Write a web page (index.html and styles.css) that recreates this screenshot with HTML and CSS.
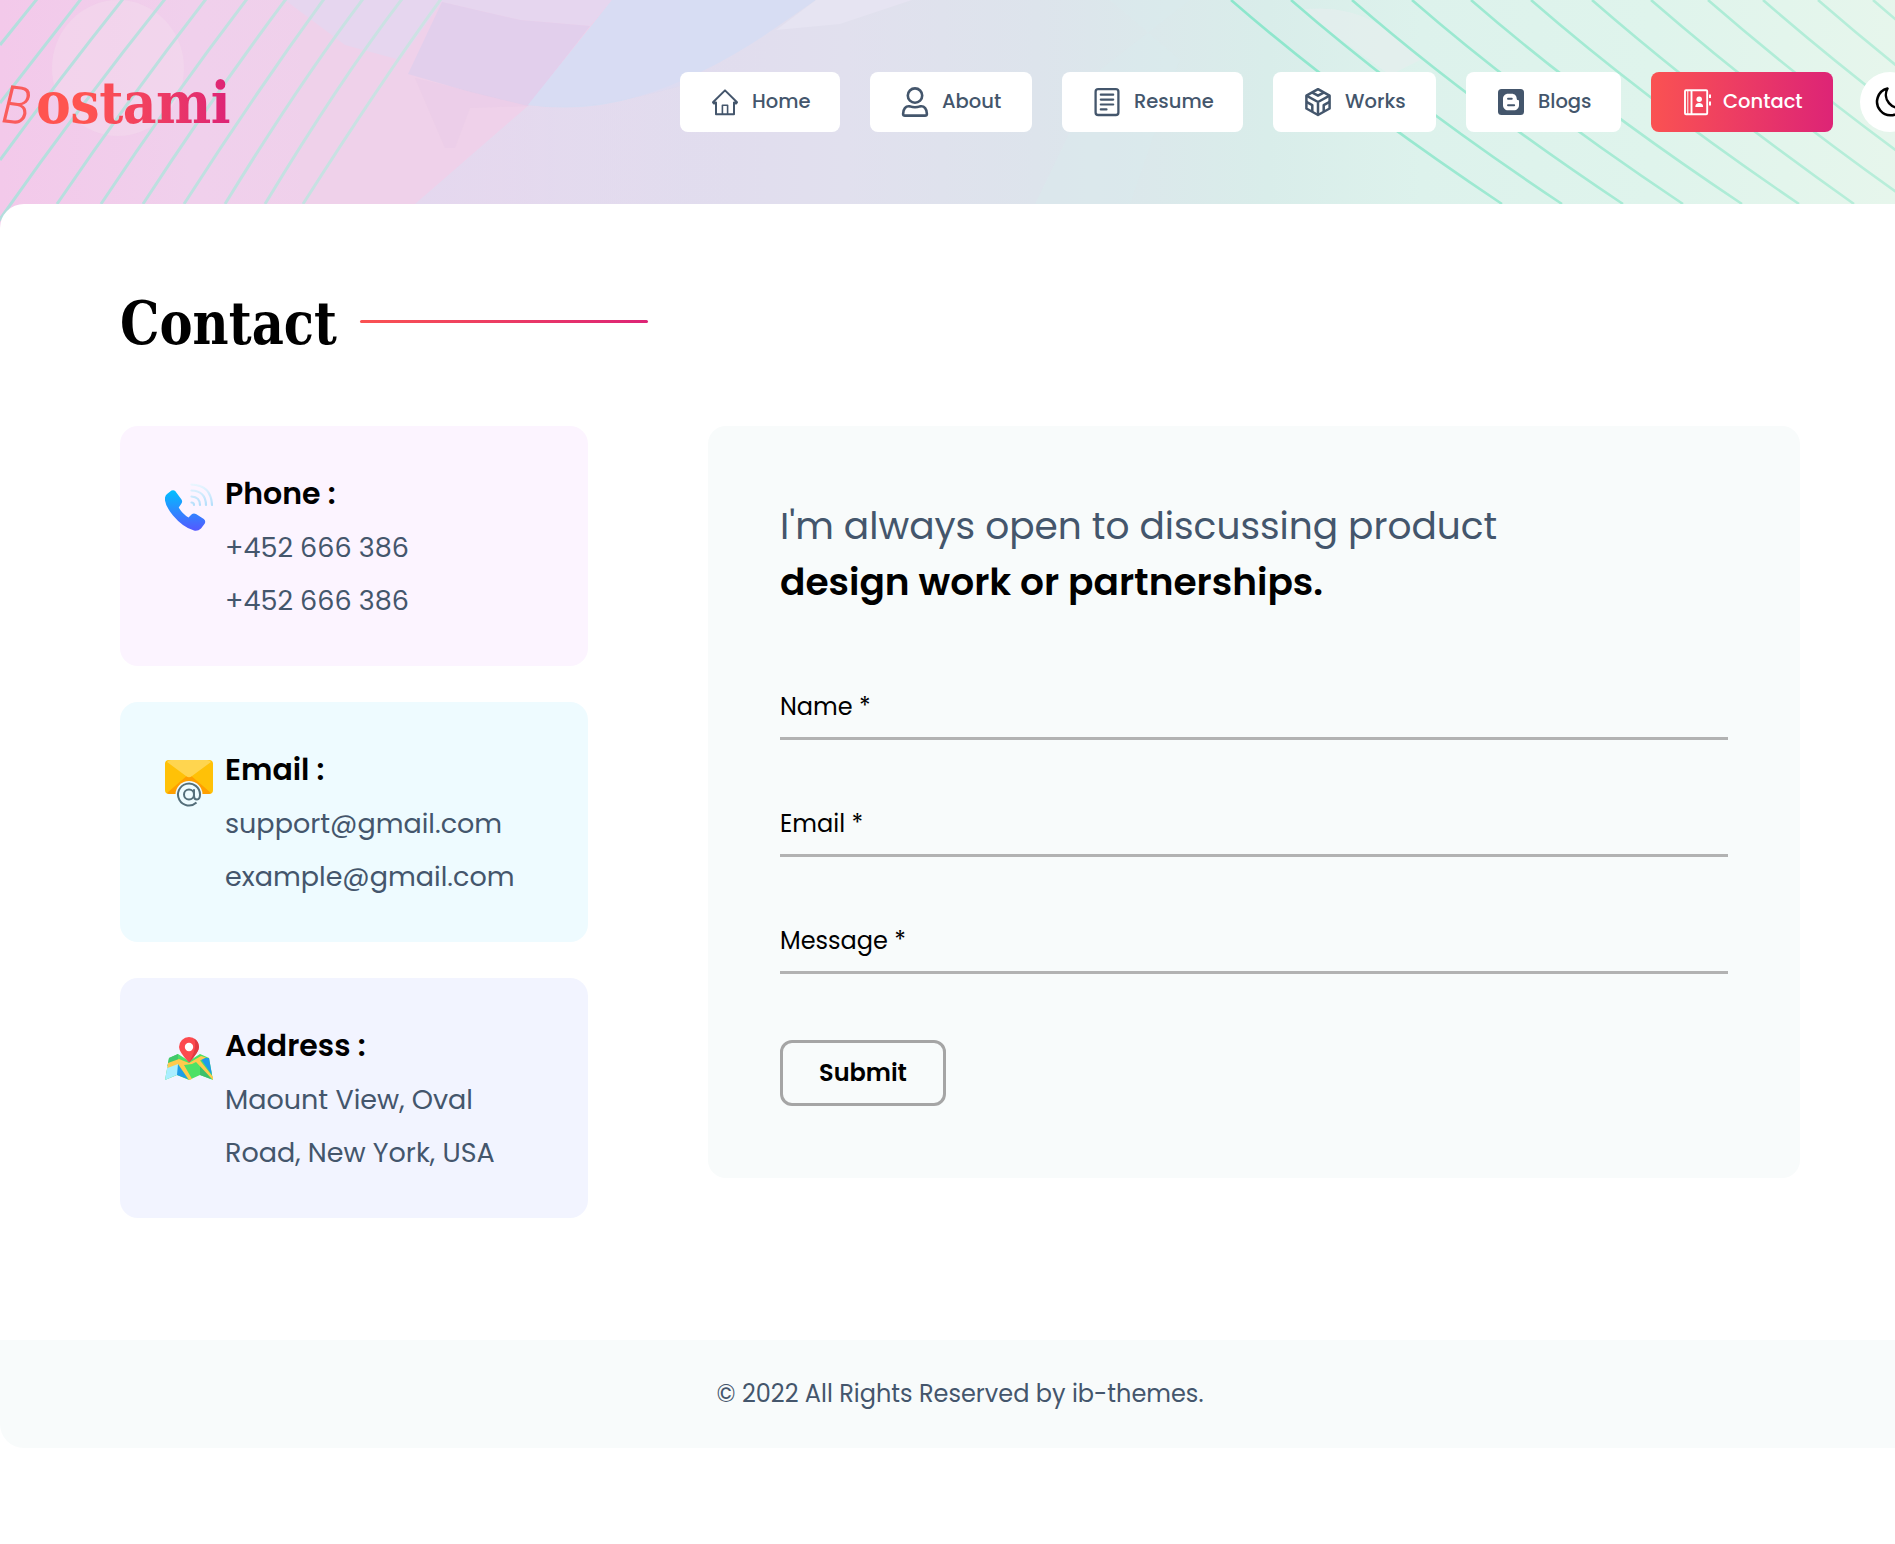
FILE: index.html
```html
<!DOCTYPE html>
<html lang="en">
<head>
<meta charset="utf-8">
<title>Bostami - Contact</title>
<link rel="stylesheet" href="styles.css">
</head>
<body>
<div class="page">
  <svg class="backdrop" viewBox="0 0 1920 240" aria-hidden="true">
    <defs>
      <linearGradient id="sky" x1="0" x2="1920" y1="0" y2="0" gradientUnits="userSpaceOnUse">
        <stop offset="0" stop-color="#f3c9ea"/>
        <stop offset=".1" stop-color="#f0d0ec"/>
        <stop offset=".23" stop-color="#efd1ea"/>
        <stop offset=".29" stop-color="#e5d9ee"/>
        <stop offset=".36" stop-color="#e1dcee"/>
        <stop offset=".44" stop-color="#e1e0ee"/>
        <stop offset=".54" stop-color="#dde4ec"/>
        <stop offset=".66" stop-color="#d9edea"/>
        <stop offset=".74" stop-color="#ddf2ec"/>
        <stop offset=".86" stop-color="#dff4ec"/>
        <stop offset="1" stop-color="#e7f6ec"/>
      </linearGradient>
      <linearGradient id="mint" x1="1230" x2="1895" y1="0" y2="0" gradientUnits="userSpaceOnUse">
        <stop offset="0" stop-color="#8ce6cc"/>
        <stop offset="1" stop-color="#b9eeda"/>
      </linearGradient>
      <linearGradient id="teal" x1="0" x2="450" y1="0" y2="0" gradientUnits="userSpaceOnUse">
        <stop offset="0" stop-color="#b3dedd"/>
        <stop offset="1" stop-color="#cfe2e4"/>
      </linearGradient>
      <linearGradient id="lavender" x1="415" x2="800" y1="0" y2="0" gradientUnits="userSpaceOnUse">
        <stop offset="0" stop-color="#e4d8ef"/>
        <stop offset="1" stop-color="#e1dfee" stop-opacity="0"/>
      </linearGradient>
    </defs>
    <rect width="1920" height="240" fill="url(#sky)"/>
    <ellipse cx="118" cy="68" rx="66" ry="68" fill="#f4dbee" opacity=".5"/>
    <path d="M300 240V0H612L528 106L415 204L385 240Z" fill="#efd1ea"/>
    <path d="M612 0L528 106L415 204L385 240H800V0Z" fill="url(#lavender)"/>
    <path d="M285 0H612L590 26L520 20L442 2L400 60L345 45Z" fill="#e6d6ef"/>
    <path d="M442 2L520 20L590 26L528 106L470 92L408 74Z" fill="#e2cfec"/>
    <path d="M415 78L528 106L470 108L455 148H445Z" fill="#e9cce8" opacity=".5"/>
    <path d="M612 0H816L765 35Q700 78 640 96Q585 113 528 105Z" fill="#d7ddf3"/>
    <path d="M612 0H680V86Q585 113 528 105Z" fill="#dadcf3" opacity=".5"/>
    <path d="M816 0H912L840 24L776 30Z" fill="#e6e4f2"/>
    <path d="M1110 0H1190L1100 70L1035 204H1130L1180 60Z" fill="#d9ebed" opacity=".4"/>
    <path d="M1300 10Q1370 0 1420 60L1390 75Z" fill="#e6eeee" opacity=".7"/>
    <g fill="none" stroke="url(#teal)" stroke-width="3">
      <path d="M37-1L0 45M81-1L0 103M123-1Q60 78 0 160M165-1Q80 105-2 222"/>
      <path d="M206-1Q130 97 57 204M247-1Q172 97 101 204M286-1Q214 95 143 204M324-1Q254 95 184 204M363-1Q298 85 225 204M402-1Q340 80 265 204M441-1Q382 80 303 204"/>
    </g>
    <g fill="none" stroke="url(#mint)" stroke-width="2.6">
      <path d="M1231 0q115 100 271 204M1291 0q115 100 271 204M1352 0q115 100 271 204M1412 0q115 100 271 204M1471 0q115 100 271 204M1531 0q115 100 268 204M1592 0q115 100 262 204M1651 0q115 100 262 204M1708 0q115 100 262 204M1763 0q115 100 262 204M1818 0q115 100 262 204M1873 0q115 100 262 204"/>
    </g>
  </svg>

  <header class="header">
    <a class="logo"><span class="logo-initial">B</span><span class="logo-name">ostami</span></a>
    <nav class="nav">
      <a class="nav-item nav-home">
        <svg class="icon" viewBox="0 0 30 30" fill="none" stroke="#44566c" stroke-width="2" stroke-linejoin="round" stroke-linecap="round"><path d="M15 3.400L27 15.300L26 16.500L24 15.500V27.200H6V15.500L4 16.500L3 15.300Z"/><path d="M12.400 27V18.300H17.600V27" stroke-width="1.600"/></svg>
        <span>Home</span></a>
      <a class="nav-item nav-about">
        <svg class="icon" viewBox="0 0 30 30" fill="none" stroke="#44566c" stroke-width="2.600" stroke-linejoin="round"><circle cx="15" cy="8.600" r="7.200"/><path d="M10 19.400Q15 21.200 20 19.400C24.500 18.600 26.900 22.300 26.900 27Q26.900 28.600 25 28.600H5Q3.100 28.600 3.100 27C3.100 22.300 5.500 18.600 10 19.400Z"/></svg>
        <span>About</span></a>
      <a class="nav-item nav-resume">
        <svg class="icon" viewBox="0 0 30 30" fill="none" stroke="#44566c" stroke-width="2.300" stroke-linecap="round"><rect x="3.600" y="2.200" width="22.800" height="25.800" rx="2.600"/><path d="M8.800 7.700H21.200M8.800 12.600H21.200M8.800 17.500H21.200M8.800 22.400H14.500" stroke-width="2.200"/></svg>
        <span>Resume</span></a>
      <a class="nav-item nav-works">
        <svg class="icon" viewBox="0 0 30 30" fill="none" stroke="#44566c" stroke-width="2.500" stroke-linejoin="round"><path d="M15 2.200L26.600 8.700V21.500L15 28L3.400 21.500V8.700Z"/><path d="M15 28V15L3.400 8.700M15 15L26.600 8.700M9.300 5.600L15 8.700L20.700 5.600M3.400 14.800L9.300 18.100V24.600M26.600 14.800L20.700 18.100V24.600"/></svg>
        <span>Works</span></a>
      <a class="nav-item nav-blogs">
        <svg class="icon" viewBox="0 0 30 30"><rect x="2" y="2" width="26" height="26" rx="3.500" fill="#44566c"/><path d="M12 6.700H15.500C19 6.700 20.700 9 20.700 11.500C20.700 13 21.300 13 22 13Q23 13.100 23 14.200V18.300C23 21.200 20.800 23.300 18 23.300H12C9.200 23.300 7 21.200 7 18.300V11.700C7 8.900 9.200 6.700 12 6.700Z" fill="#fff"/><path d="M12 11.800H15.800M12 18.300H18.200" stroke="#44566c" stroke-width="1.900" stroke-linecap="round"/></svg>
        <span>Blogs</span></a>
      <a class="nav-item nav-contact active">
        <svg class="icon" viewBox="0 0 30 30" fill="none" stroke="#fff" stroke-width="1.900"><rect x="4" y="3.200" width="22.200" height="24" rx="1"/><path d="M6.800 3.200V27.200" stroke-width="1"/><path d="M10.500 3.200V27.200"/><path d="M29 7.500V11M29 14.500V18.500" stroke-width="2"/><circle cx="18.200" cy="12.300" r="2.700" fill="#fff" stroke="none"/><path d="M14.300 20C14.300 17 16 16 18.200 16S22.100 17 22.100 20Z" fill="#fff" stroke="none"/></svg>
        <span>Contact</span></a>
      <button class="theme-toggle" aria-label="Theme"><svg class="icon" viewBox="0 0 30 30" fill="none" stroke="#000" stroke-width="2.500" stroke-linejoin="round"><path d="M12.500 1.500A13.600 13.600 0 1 0 28.200 20A13 13 0 0 1 12.500 1.500Z"/></svg></button>
    </nav>
  </header>

  <main class="panel">
    <section class="content">
      <h1 class="title"><span class="title-text">Contact</span></h1>
      <div class="columns">
        <div class="cards">
          <article class="card card-phone">
            <svg class="card-icon" viewBox="0 0 48 48"><defs><linearGradient id="call" x1="0" y1="0" x2="0" y2="1"><stop offset="0" stop-color="#00c0ff"/><stop offset="1" stop-color="#5558ff"/></linearGradient><linearGradient id="wave" x1="0" y1="0" x2="0" y2="22" gradientUnits="userSpaceOnUse"><stop offset="0" stop-color="#ecf7ff"/><stop offset="1" stop-color="#b5dffb"/></linearGradient></defs><path d="M2 11L6.500 7.600Q8.500 6.500 10.200 8L16.500 16.500Q18 19 16 21.300L13.700 24.500Q17.500 31 23.500 34.500L26.500 31.500Q28.500 29.800 31 31L38.800 36Q41 38 39.800 40.500L36 45.500Q33 48.300 29 47.500Q18 44.500 8 32.500Q-1 21.500 0 14.500Q.5 12.300 2 11Z" fill="url(#call)"/><path d="M26.500 19.500Q29 19.500 29 22M26.500 13.500Q35 14 35 22M26.500 7.500Q40.700 8 41 22M26.500 1.500Q46 2 47 22" fill="none" stroke="url(#wave)" stroke-width="2.200" stroke-linecap="round"/></svg>
            <div><h2>Phone :</h2><p>+452 666 386</p><p>+452 666 386</p></div>
          </article>
          <article class="card card-email">
            <svg class="card-icon" viewBox="0 0 48 48"><path d="M4 1H44Q48 1 48 5V31Q48 35 44 35H4Q0 35 0 31V5Q0 1 4 1Z" fill="#ffc107"/><path d="M2 34L24 15L46 34L44 35H4Z" fill="#ff9f00"/><path d="M2 3Q3 1 6 1H42Q45 1 46 3L27 17Q24 19.500 21 17Z" fill="#ffd54f"/><circle cx="24" cy="35.600" r="13.500" fill="#eefbff"/><g fill="none" stroke="#546e7a" stroke-width="2"><circle cx="24" cy="35.600" r="5"/><path d="M29 30.300V37Q29 40.600 32 40.600Q35 40.300 35 35.600A11 11 0 1 0 31.500 43.600"/></g></svg>
            <div><h2>Email :</h2><p>support@gmail.com</p><p>example@gmail.com</p></div>
          </article>
          <article class="card card-address">
            <svg class="card-icon" viewBox="0 0 48 48"><path d="M4 21L13 17L24 24L35 17L44 21L48 43L35 38L24 43L12 38L0 43Z" fill="#4ce166"/><path d="M4 21L13 17V25L2.500 29Z" fill="#42c86b"/><path d="M2.500 29L13 25V37.500L0 43Z" fill="#a9eeff"/><path d="M13 27L23 42L12 38Z" fill="#1e9ce8"/><path d="M35 21L44 21L47 38Z" fill="#1e9ce8"/><path d="M35 25L46 42L35 38Z" fill="#3dc06a"/><path d="M3 26L14 22L24 26L36 19L41 20.500L35 23.500L48 40V43L31 25L27 27L19 28L27 42L24 43L13 27L2.500 31Z" fill="#ffca4d"/><path d="M24 25.500Q14 15 14 10A10 10 0 0 1 34 10Q34 15 24 25.500Z" fill="#fc4a4f"/><path d="M29 1.500A10 10 0 0 1 34 10Q34 15 24 25.500Q33 10 29 1.500Z" fill="#e03a42"/><circle cx="24" cy="10" r="4.200" fill="#fff"/></svg>
            <div><h2>Address :</h2><p>Maount View, Oval</p><p>Road, New York, USA</p></div>
          </article>
        </div>
        <form class="form">
          <h3 class="form-title"><span class="form-lead">I'm always open to discussing product</span><strong>design work or partnerships.</strong></h3>
          <label class="field">Name *</label>
          <label class="field">Email *</label>
          <label class="field">Message *</label>
          <button class="submit" type="button">Submit</button>
        </form>
      </div>
    </section>
    <footer class="footer">© 2022 All Rights Reserved by ib-themes.</footer>
  </main>
</div>
</body>
</html>
```
FILE: styles.css
```css
* { box-sizing: border-box; }

body {
  margin: 0;
  overflow: hidden;
  background: #fff;
  color: #44566c;
  font-family: Poppins, Inter, "Open Sans", sans-serif;
}

h1, h2, h3, p { margin: 0; }

.page { position: relative; width: 1920px; }

.backdrop {
  position: absolute;
  top: 0;
  left: 0;
  z-index: -1;
  width: 1920px;
  height: 240px;
}

.header {
  display: flex;
  justify-content: space-between;
  height: 204px;
  padding-top: 72px;
}

.logo {
  display: flex;
  height: 60px;
  line-height: 62px;
}

.logo-initial {
  width: 36px;
  color: #fa5c5c;
  font-size: 54px;
  font-weight: 300;
  font-style: italic;
  transform: translateY(2px) scaleX(.85) rotate(6deg);
}

.logo-name {
  background: linear-gradient(90deg, #ff5450 25%, #dd2476);
  background-clip: text;
  color: transparent;
  font-family: "Roboto Slab", "DejaVu Serif Condensed", "DejaVu Serif", serif;
  font-size: 58px;
  font-weight: 700;
  font-stretch: condensed;
  letter-spacing: -.5px;
}

.nav { display: flex; gap: 30px; }

.nav-item {
  display: flex;
  align-items: center;
  gap: 12px;
  height: 60px;
  padding-left: 30px;
  border-radius: 8px;
  background: #fff;
  font-size: 19.5px;
  font-weight: 500;
  line-height: 28px;
  white-space: nowrap;
}

.nav-home { width: 160px; }
.nav-about { width: 162px; }
.nav-resume { width: 181px; }
.nav-works { width: 163px; }
.nav-blogs { width: 155px; }
.nav-contact { width: 182px; }

.nav-item.active {
  background: linear-gradient(90deg, #fa5252, #dd2476);
  color: #fff;
}

.icon { flex: none; width: 30px; height: 30px; }

.theme-toggle {
  display: flex;
  align-items: center;
  justify-content: center;
  width: 60px;
  height: 60px;
  margin-left: -3px;
  padding: 0;
  border: 0;
  border-radius: 50%;
  background: #fff;
}

.panel {
  overflow: hidden;
  border-radius: 24px;
  background: #fff;
}

.content { height: 1136px; padding: 84px 120px 0; }

.title {
  display: flex;
  align-items: center;
  gap: 24px;
  height: 66px;
  margin-bottom: 72px;
  color: #000;
  font-family: "Roboto Slab", "DejaVu Serif Condensed", "DejaVu Serif", serif;
  font-size: 59px;
  font-weight: 700;
  font-stretch: condensed;
}

.title-text {
  width: 216px;
  padding-top: 4px;
  transform: scaleX(.935);
  transform-origin: left;
}

.title::after {
  content: "";
  width: 288px;
  height: 3px;
  border-radius: 2px;
  background: linear-gradient(90deg, #fa5252, #dd2476);
}

.columns { display: flex; align-items: flex-start; gap: 120px; }

.cards { display: flex; flex-direction: column; gap: 36px; width: 468px; }

.card {
  display: flex;
  gap: 12px;
  height: 240px;
  padding: 42px 45px;
  border-radius: 18px;
}

.card-phone { background: #fcf4ff; }
.card-email { background: #eefbff; }
.card-address { background: #f2f4ff; }

.card-icon { flex: none; width: 48px; height: 48px; margin-top: 15px; }
.card-address .card-icon { margin-top: 17px; }

.card h2 {
  margin-bottom: 2px;
  color: #000;
  font-size: 30px;
  font-weight: 600;
  line-height: 51px;
}

.card p { font-size: 27px; line-height: 53px; white-space: nowrap; }

.form {
  flex: 1;
  height: 752px;
  padding: 72px;
  border-radius: 18px;
  background: #f8fbfb;
  color: #000;
}

.form-title {
  display: flex;
  flex-direction: column;
  align-items: flex-start;
  margin-bottom: 70px;
  font-size: 37.5px;
  line-height: 56px;
}

.form-lead { color: #44566c; font-weight: 400; }
.form-title strong { font-weight: 600; }

.field {
  display: block;
  height: 60px;
  margin-bottom: 57px;
  border-bottom: 3px solid #b2b2b2;
  font-size: 24px;
  line-height: 54px;
}

.submit {
  width: 166px;
  height: 66px;
  margin-top: 9px;
  padding: 0;
  border: 3px solid #a5a5a5;
  border-radius: 12px;
  background: transparent;
  color: #000;
  font: 600 24px/60px Poppins, Inter, sans-serif;
}

.footer {
  height: 108px;
  background: #f8fbfb;
  font-size: 24px;
  line-height: 108px;
  text-align: center;
}
```
